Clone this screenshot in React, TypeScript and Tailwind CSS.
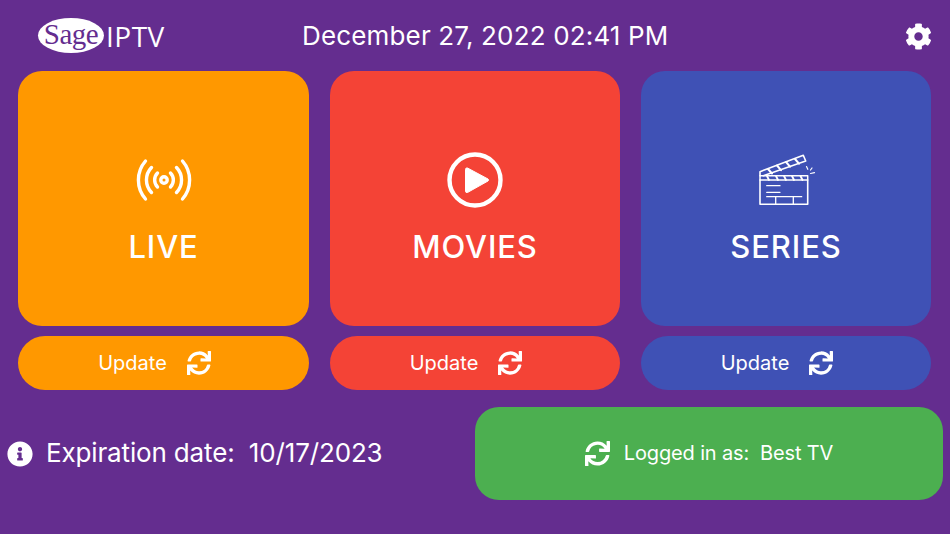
import { FaSync, FaCog, FaInfoCircle } from "react-icons/fa";

function LiveIcon() {
  return (
    <svg width="56" height="44" viewBox="0 0 56 44" fill="none" stroke="white" strokeWidth="3.4" strokeLinecap="round">
      <circle cx="28" cy="22" r="3.2" />
      <path d="M21.500 15a10 10 0 0 0 0 14" />
      <path d="M34.500 15a10 10 0 0 1 0 14" />
      <path d="M15.500 9.500a18 18 0 0 0 0 25" />
      <path d="M40.500 9.500a18 18 0 0 1 0 25" />
      <path d="M9.500 3a29 29 0 0 0 0 38" />
      <path d="M46.500 3a29 29 0 0 1 0 38" />
    </svg>
  );
}

function PlayIcon() {
  return (
    <svg width="56" height="56" viewBox="0 0 56 56" fill="none">
      <circle cx="28" cy="28" r="25.500" stroke="white" strokeWidth="4.400" />
      <path d="M20.500 16 L41 27 Q42 28 41 29 L20.500 40.500 Q18.500 41 18.500 39 L18.500 17.500 Q18.500 15.500 20.500 16Z" fill="white" stroke="white" strokeWidth="1" />
    </svg>
  );
}

function ClapIcon() {
  return (
    <svg width="56" height="54" viewBox="0 0 56 54" className="overflow-visible" fill="none" stroke="white" strokeLinecap="round" strokeLinejoin="round">
      <path d="M2 27H49.700V51.300H2Z" strokeWidth="1.600" />
      <path d="M2 27V22.700H49.700V27" strokeWidth="1.500" />
      <path d="M2 22.700V18.700L45.300 2.300L47.700 8L5.300 22.700" strokeWidth="1.600" />
      <path d="M9 23l2 4M18 23l2 4M26 23l2 4M34 23l2 4M42.500 23l2 4" strokeWidth="1.800" />
      <path d="M10 16l4 4.500M19 12.500l4 4.700M28 9l4 4.700M37 6l4 4.700" strokeWidth="2" />
      <path d="M8.700 32.700H22M8.700 39.300H22" strokeWidth="1.300" />
      <path d="M8.700 43.700H43.700M17.700 43.700V51M35.300 43.700V51" strokeWidth="1.300" />
      <path d="M48.500 13.500l1.300 2.800M52.500 17l1.500-2M52.500 20.500l4-.8" strokeWidth="1.200" />
    </svg>
  );
}

const cards = [
  { label: "LIVE", bg: "bg-[#ff9800]", icon: <LiveIcon /> },
  { label: "MOVIES", bg: "bg-[#f44336]", icon: <PlayIcon /> },
  { label: "SERIES", bg: "bg-[#3f51b5]", icon: <ClapIcon /> },
];

export default function App() {
  return (
    <div className="w-[950px] h-[534px] overflow-hidden bg-[#642d8f] text-white font-['Inter','Liberation_Sans',sans-serif]">
      <header className="h-[71px] flex items-center pl-[38px] pr-[18px]">
        <div className="flex items-center w-[264px]">
          <div className="w-[66px] h-[35px] rounded-[50%] bg-white flex items-center justify-center text-[#642d8f] text-[29px] leading-none font-['Liberation_Serif',serif] tracking-[-0.5px] pb-[3px]">
            Sage
          </div>
          <span className="ml-[2px] text-[28px] leading-none tracking-[0.5px] font-['Open_Sans',sans-serif] text-white">IPTV</span>
        </div>
        <div className="text-[26px] leading-none tracking-[0.16px] w-[366px] text-center whitespace-nowrap">December 27, 2022 02:41 PM</div>
        <FaCog className="ml-auto text-[27px] mt-[1px]" />
      </header>

      <div className="grid grid-cols-[291px_290px_290px] gap-x-[21px] gap-y-[10px] pl-[18px]">
        {cards.map((c) => (
          <div key={c.label} className={`${c.bg} h-[255px] rounded-[24px] flex flex-col items-center`}>
            <div className="h-[56px] mt-[81px] flex items-center justify-center">{c.icon}</div>
            <div className="mt-[20px] text-[31px] leading-[38px] font-medium tracking-[0.9px]">{c.label}</div>
          </div>
        ))}
        {cards.map((c) => (
          <div key={c.label} className={`${c.bg} h-[54px] rounded-[27px] flex items-center justify-center pr-[18px]`}>
            <span className="text-[20px]">Update</span>
            <FaSync className="ml-[20px] text-[24px]" />
          </div>
        ))}
      </div>

      <div className="flex items-center mt-[17px] pl-[7px] pr-[7px]">
        <FaInfoCircle className="text-[26px] shrink-0" />
        <div className="ml-[13px] pb-[1px] text-[26px] leading-none tracking-[-0.15px] whitespace-pre">Expiration date:  10/17/2023</div>
        <div className="ml-auto w-[468px] h-[93px] rounded-[24px] bg-[#4caf50] flex items-center justify-center">
          <FaSync className="text-[25px]" />
          <span className="ml-[14px] pb-[1px] text-[20px] tracking-[-0.15px] whitespace-pre">Logged in as:  Best TV</span>
        </div>
      </div>
    </div>
  );
}
